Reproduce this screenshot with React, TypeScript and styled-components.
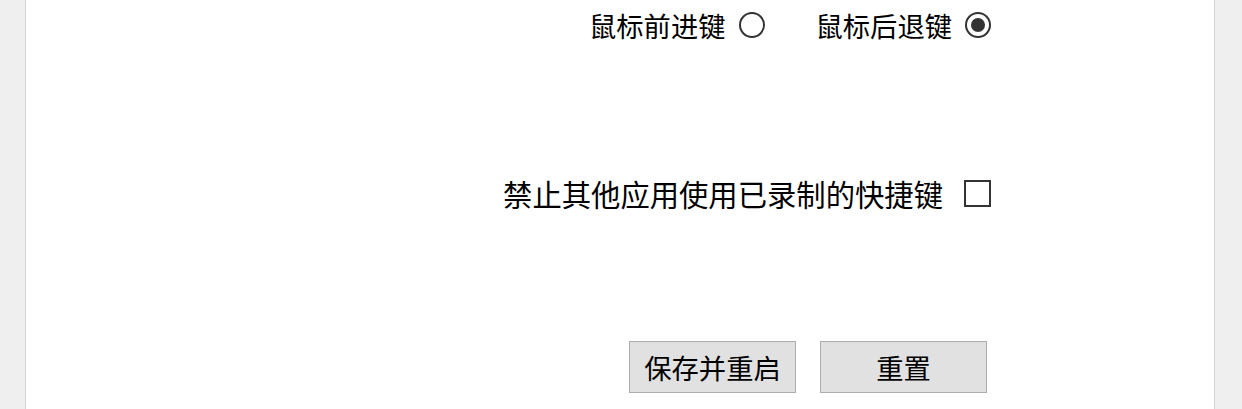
import React from "react";
import styled, { createGlobalStyle } from "styled-components";

const Global = createGlobalStyle`
  html, body { margin: 0; padding: 0; background: #efefef; }
  body { font-family: "Noto Sans CJK SC", "Microsoft YaHei", sans-serif; color: #000; }
`;

const Page = styled.div`
  height: 409px;
  display: flex;
  padding: 0 27px 0 25px;
  overflow: hidden;
`;

const Panel = styled.div`
  flex: 1;
  background: #fff;
  border-left: 1px solid #d3d3d3;
  border-right: 1px solid #d3d3d3;
  display: flex;
  flex-direction: column;
  align-items: flex-end;
  padding-right: 223px;
`;

const Row = styled.div<{ $top: number; $h: number }>`
  display: flex;
  align-items: center;
  height: ${(p) => p.$h}px;
  margin-top: ${(p) => p.$top}px;
`;

const Option = styled.label<{ $gap: number }>`
  display: flex;
  align-items: center;
  gap: ${(p) => p.$gap}px;
  & + & { margin-left: 51px; }
`;

const Label = styled.span<{ $size: number }>`
  font-size: ${(p) => p.$size}px;
  line-height: 1;
  white-space: nowrap;
`;

const Radio = styled.span<{ $on?: boolean }>`
  box-sizing: border-box;
  width: 26px;
  height: 26px;
  border: 2px solid #333;
  border-radius: 50%;
  display: flex;
  align-items: center;
  justify-content: center;
  &::after {
    content: "";
    width: 14px;
    height: 14px;
    border-radius: 50%;
    background: #333;
    display: ${(p) => (p.$on ? "block" : "none")};
  }
`;

const Check = styled.span`
  box-sizing: border-box;
  width: 27px;
  height: 27px;
  border: 2px solid #333;
`;

const Buttons = styled.div`
  display: flex;
  gap: 24px;
  margin-top: 122px;
  margin-right: 4px;
`;

const Button = styled.button`
  box-sizing: border-box;
  width: 167px;
  height: 52px;
  background: #e1e1e1;
  border: 1px solid #adadad;
  font-family: "Noto Sans CJK SC", sans-serif;
  font-size: 27.3px;
  color: #000;
  padding: 0;
  display: flex;
  align-items: center;
  justify-content: center;
`;

export default function App() {
  return (
    <>
      <Global />
      <Page>
        <Panel>
          <Row $top={0} $h={51}>
            <Option $gap={13}>
              <Label $size={27.3}>鼠标前进键</Label>
              <Radio />
            </Option>
            <Option $gap={13}>
              <Label $size={27.3}>鼠标后退键</Label>
              <Radio $on />
            </Option>
          </Row>
          <Row $top={117} $h={51}>
            <Option $gap={21}>
              <Label $size={29.33}>禁止其他应用使用已录制的快捷键</Label>
              <Check />
            </Option>
          </Row>
          <Buttons>
            <Button>保存并重启</Button>
            <Button>重置</Button>
          </Buttons>
        </Panel>
      </Page>
    </>
  );
}
